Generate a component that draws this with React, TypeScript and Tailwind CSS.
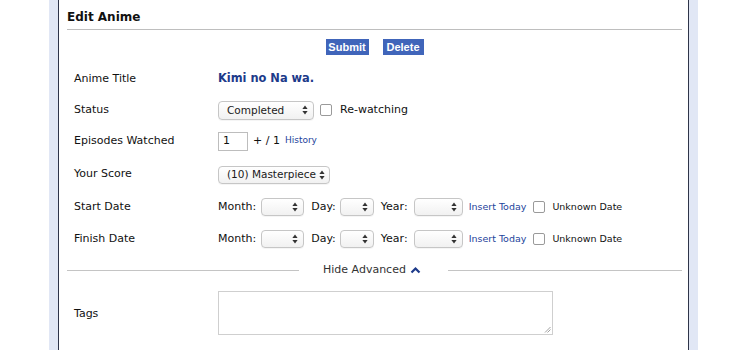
import React from "react";

const Arrows = () => (
  <svg width="6" height="10" viewBox="0 0 6 10" className="shrink-0">
    <path d="M3 0.5 L5.6 4 L0.4 4 Z" fill="#333" />
    <path d="M3 9.5 L5.6 6 L0.4 6 Z" fill="#333" />
  </svg>
);

const Select = ({ w, text, h = 18 }: { w: number; text?: string; h?: number }) => (
  <div
    className="flex items-center justify-between gap-[3px] whitespace-nowrap rounded-[4px] border border-[#c6c6c6] bg-gradient-to-b from-white to-[#f1f1f1] pl-[8px] pr-[5px] text-[10.5px] text-[#1a1a1a] shadow-[0_1px_0_rgba(0,0,0,0.04)]"
    style={{ width: w, height: h }}
  >
    <span className="leading-none">{text ?? ""}</span>
    <Arrows />
  </div>
);

const Check = () => (
  <div className="h-[12px] w-[12px] shrink-0 rounded-[2px] border border-[#9a9a9a] bg-white" />
);

const Row = ({ label, h, children }: { label: string; h: number; children: React.ReactNode }) => (
  <div className="flex items-center" style={{ height: h }}>
    <div className="w-[151px] pl-[7px] text-[11px] text-[#111]">{label}</div>
    <div className="flex items-center whitespace-nowrap">{children}</div>
  </div>
);

const DateRow = () => (
  <div className="flex items-center text-[11px] text-[#111]">
    <span>Month:</span>
    <div className="ml-[5px]"><Select w={43} /></div>
    <span className="ml-[7px]">Day:</span>
    <div className="ml-[4px]"><Select w={34} /></div>
    <span className="ml-[7px]">Year:</span>
    <div className="ml-[6px]"><Select w={49} /></div>
    <span className="ml-[6px] text-[9.5px] text-[#1d439b]">Insert Today</span>
    <div className="ml-[7px]"><Check /></div>
    <span className="ml-[7px] text-[9.5px]">Unknown Date</span>
  </div>
);

export default function App() {
  return (
    <div
      className="flex h-[350px] w-[750px] overflow-hidden bg-white"
      style={{ fontFamily: '"DejaVu Sans", Verdana, sans-serif' }}
    >
      <div className="w-[49px] shrink-0" />
      <div className="w-[9px] shrink-0 bg-[#e1e7f5]" />
      <div className="w-[631px] shrink-0 border-x border-[#2e3449] pl-[8px] pr-[6px]">
        <div className="h-[30px] border-b border-[#bebebe] pt-[9px] text-[12px] font-bold leading-[16px] text-[#111]">
          Edit Anime
        </div>
        <div
          className="mt-[9px] flex justify-center gap-[14px]"
          style={{ fontFamily: '"Liberation Sans", Arial, sans-serif' }}
        >
          <div className="flex h-[16px] w-[43px] items-center justify-center bg-[#4065ba] text-[11px] font-bold text-white">
            Submit
          </div>
          <div className="flex h-[16px] w-[41px] items-center justify-center bg-[#4065ba] text-[11px] font-bold text-white">
            Delete
          </div>
        </div>
        <div className="mt-[9px]">
          <Row label="Anime Title" h={30}>
            <span className="text-[11.4px] font-bold text-[#1d3a8a]">Kimi no Na wa.</span>
          </Row>
          <Row label="Status" h={32}>
            <Select w={96} h={19} text="Completed" />
            <div className="ml-[6px]"><Check /></div>
            <span className="ml-[8px] text-[11px] text-[#111]">Re-watching</span>
          </Row>
          <Row label="Episodes Watched" h={30}>
            <div className="flex h-[19px] w-[30px] items-center border border-[#bdbdbd] pl-[4px] text-[11px] text-[#111]">
              1
            </div>
            <span className="ml-[5px] text-[11px] text-[#111]">+ / 1</span>
            <span className="ml-[5px] text-[9px] text-[#1d439b]">History</span>
          </Row>
          <Row label="Your Score" h={37}>
            <Select w={112} text="(10) Masterpiece" />
          </Row>
          <Row label="Start Date" h={28}>
            <DateRow />
          </Row>
          <Row label="Finish Date" h={36}>
            <DateRow />
          </Row>
          <div className="flex h-[26px] items-center">
            <div className="h-px w-[232px] bg-[#c4c4c4]" />
            <div className="ml-[24px] flex items-center whitespace-nowrap text-[11px] text-[#333]">
              <span>Hide Advanced</span>
              <svg width="11" height="8" viewBox="0 0 11 8" className="ml-[4px]">
                <polyline points="1.5,6.5 5.5,2.5 9.5,6.5" fill="none" stroke="#1d3a8a" strokeWidth="2.2" />
              </svg>
            </div>
            <div className="ml-[27px] h-px flex-1 bg-[#c4c4c4]" />
          </div>
          <div className="flex h-[62px] items-start">
            <div className="flex h-[62px] w-[151px] items-center pl-[7px] text-[11px] text-[#111]">Tags</div>
            <div className="relative mt-[8px] h-[44px] w-[335px] border border-[#cfcfcf] bg-white">
              <svg width="7" height="7" viewBox="0 0 7 7" className="absolute bottom-[1px] right-[1px]">
                <line x1="1" y1="6.5" x2="6.5" y2="1" stroke="#888" strokeWidth="0.8" />
                <line x1="3.5" y1="6.5" x2="6.5" y2="3.5" stroke="#888" strokeWidth="0.8" />
              </svg>
            </div>
          </div>
        </div>
      </div>
      <div className="w-[9px] shrink-0 bg-[#e1e7f5]" />
      <div className="flex-1" />
    </div>
  );
}
